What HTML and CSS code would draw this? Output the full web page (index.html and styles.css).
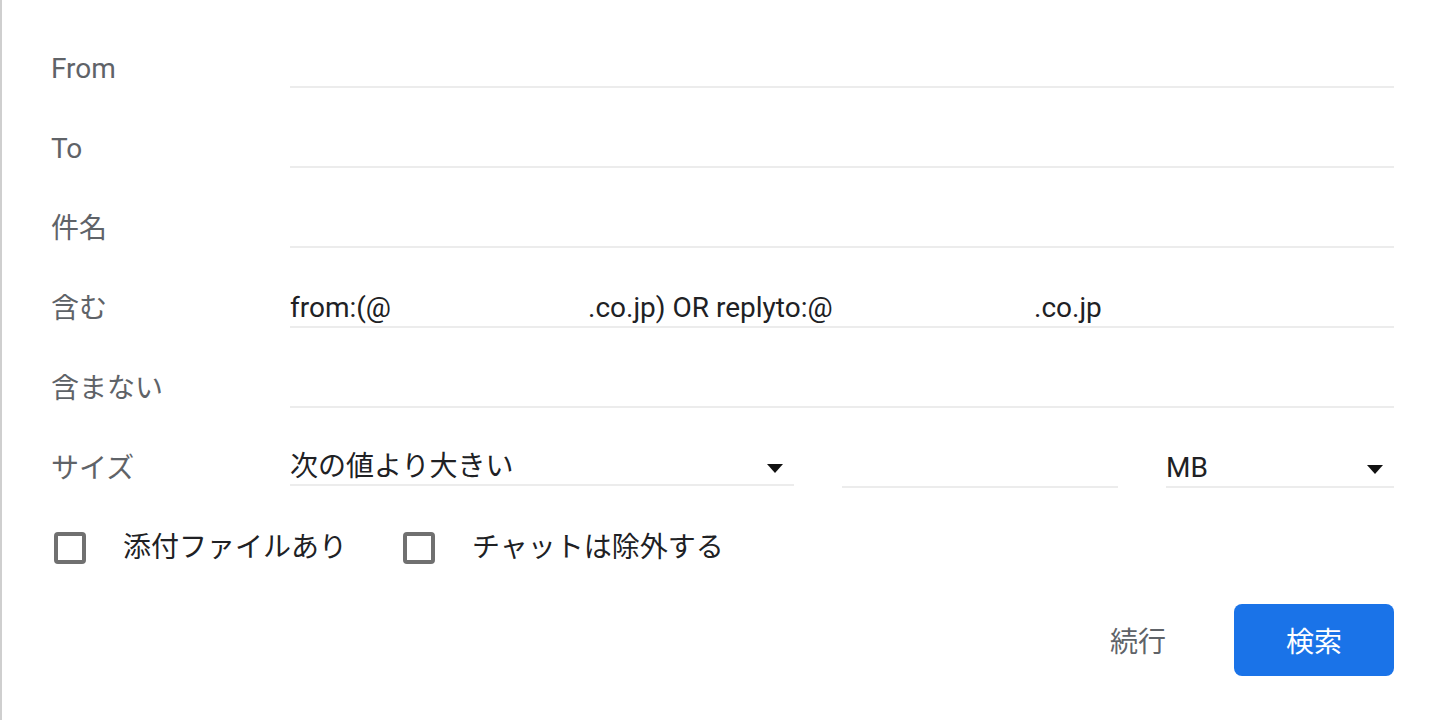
FILE: index.html
```html
<!DOCTYPE html>
<html lang="ja">
<head>
<meta charset="utf-8">
<title>検索オプション</title>
<link rel="stylesheet" href="styles.css">
</head>
<body>
<div class="panel">
  <form class="search-form">
    <div class="row">
      <div class="label">From</div>
      <div class="field"></div>
    </div>
    <div class="row">
      <div class="label">To</div>
      <div class="field"></div>
    </div>
    <div class="row">
      <div class="label">件名</div>
      <div class="field"></div>
    </div>
    <div class="row">
      <div class="label">含む</div>
      <div class="field value"><span class="seg seg-a">from:(@</span><span class="seg seg-b">.co.jp) OR replyto:@</span><span class="seg">.co.jp</span></div>
    </div>
    <div class="row">
      <div class="label">含まない</div>
      <div class="field"></div>
    </div>
    <div class="row">
      <div class="label">サイズ</div>
      <div class="size-fields">
        <div class="field select select-op"><span class="value">次の値より大きい</span><span class="arrow"></span></div>
        <div class="field num"></div>
        <div class="field select select-unit"><span class="value">MB</span><span class="arrow"></span></div>
      </div>
    </div>
    <div class="checks">
      <label class="check"><span class="box"></span><span class="check-text">添付ファイルあり</span></label>
      <label class="check"><span class="box"></span><span class="check-text">チャットは除外する</span></label>
    </div>
    <div class="actions">
      <button type="button" class="btn-text">続行</button>
      <button type="button" class="btn-primary">検索</button>
    </div>
  </form>
</div>
</body>
</html>
```

FILE: styles.css
```css
html, body {
  margin: 0;
  padding: 0;
  background: #ffffff;
}

body {
  font-family: Roboto, "Noto Sans CJK JP", sans-serif;
  font-size: 28px;
  color: #202124;
}

.panel {
  box-sizing: border-box;
  width: 1440px;
  height: 720px;
  border-left: 2px solid #cfcfcf;
  padding: 8px 46px 0 49px;
}

.search-form {
  display: flex;
  flex-direction: column;
}

.row {
  display: flex;
  align-items: flex-end;
  height: 80px;
}

.label {
  width: 239px;
  flex: none;
  color: #5f6368;
  line-height: 36px;
  height: 37px;
  white-space: nowrap;
}

.field {
  flex: 1;
  height: 36px;
  line-height: 36px;
  border-bottom: 2px solid #ececec;
  white-space: nowrap;
  overflow: hidden;
  color: #202124;
}

.seg {
  display: inline-block;
}

.seg-a {
  width: 298px;
}

.seg-b {
  width: 446px;
}

.size-fields {
  flex: 1;
  display: flex;
  gap: 48px;
}

.select {
  display: flex;
  align-items: center;
  justify-content: space-between;
  padding-right: 11px;
}

.select-op {
  flex: none;
  width: 504px;
  box-sizing: border-box;
}

.num {
  flex: none;
  width: 276px;
}

.select-unit {
  flex: 1;
}

.arrow {
  width: 0;
  height: 0;
  border-left: 8px solid transparent;
  border-right: 8px solid transparent;
  border-top: 9px solid #111111;
  margin-top: 2px;
}

.checks {
  display: flex;
  align-items: center;
  height: 80px;
  margin-top: 20px;
  padding-left: 3px;
  gap: 56px;
}

.check {
  display: flex;
  align-items: center;
  gap: 37px;
  color: #202124;
  white-space: nowrap;
}

.box {
  box-sizing: border-box;
  width: 32px;
  height: 32px;
  border: 4px solid #707070;
  border-radius: 4px;
  flex: none;
}

.check-text {
  line-height: 36px;
}

.actions {
  display: flex;
  justify-content: flex-end;
  align-items: center;
  margin-top: 16px;
  gap: 44px;
}

.btn-text {
  font: inherit;
  color: #5f6368;
  background: none;
  border: none;
  padding: 0 24px;
  height: 72px;
}

.btn-primary {
  font: inherit;
  color: #ffffff;
  background: #1a73e8;
  border: none;
  border-radius: 8px;
  width: 160px;
  height: 72px;
  padding: 0;
}
```
